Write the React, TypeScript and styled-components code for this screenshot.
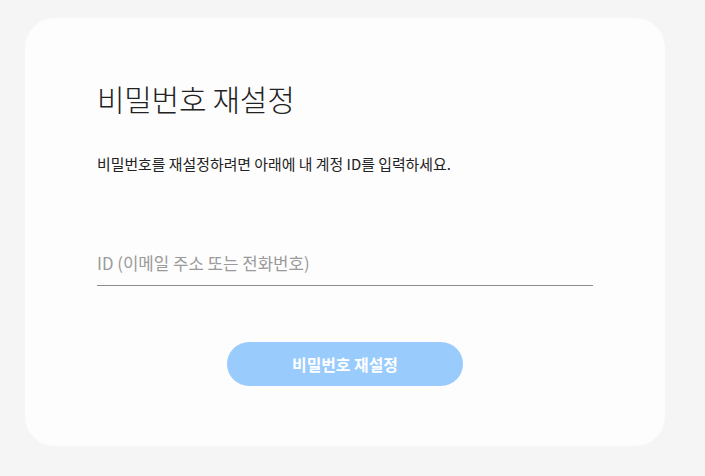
import React from "react";
import styled, { createGlobalStyle } from "styled-components";

const GlobalStyle = createGlobalStyle`
  html, body {
    margin: 0;
    padding: 0;
    background: #f5f5f5;
    font-family: "Noto Sans CJK KR", "Noto Sans", sans-serif;
  }
  * { box-sizing: border-box; }
`;

const Page = styled.div`
  padding: 18px 0 0 25px;
`;

const Card = styled.div`
  width: 640px;
  height: 428px;
  background: #fdfdfd;
  border-radius: 30px;
  padding: 60px 72px 0 72px;
  display: flex;
  flex-direction: column;
`;

const Title = styled.h1`
  margin: 0;
  font-size: 30px;
  font-weight: 300;
  line-height: 40px;
  color: #222;
  letter-spacing: -0.3px;
`;

const Description = styled.p`
  margin: 36px 0 0 0;
  font-size: 14.9px;
  font-weight: 400;
  line-height: 20px;
  color: #222;
`;

const Field = styled.input`
  margin-top: 77px;
  width: 100%;
  border: none;
  border-bottom: 1px solid #8c8c8c;
  background: transparent;
  font-family: inherit;
  font-size: 16.8px;
  padding: 0 0 10px 0;
  line-height: 24px;
  height: 35px;
  outline: none;
  color: #222;
  &::placeholder {
    color: #9a9a9a;
  }
`;

const Actions = styled.div`
  margin-top: 56px;
  display: flex;
  justify-content: center;
`;

const Button = styled.button`
  width: 236px;
  height: 44px;
  border: none;
  border-radius: 22px;
  background: #99cbfd;
  color: #fff;
  font-family: inherit;
  font-size: 15.9px;
  font-weight: 700;
`;

export default function App() {
  return (
    <>
      <GlobalStyle />
      <Page>
        <Card>
          <Title>비밀번호 재설정</Title>
          <Description>비밀번호를 재설정하려면 아래에 내 계정 ID를 입력하세요.</Description>
          <Field placeholder="ID (이메일 주소 또는 전화번호)" />
          <Actions>
            <Button>비밀번호 재설정</Button>
          </Actions>
        </Card>
      </Page>
    </>
  );
}
